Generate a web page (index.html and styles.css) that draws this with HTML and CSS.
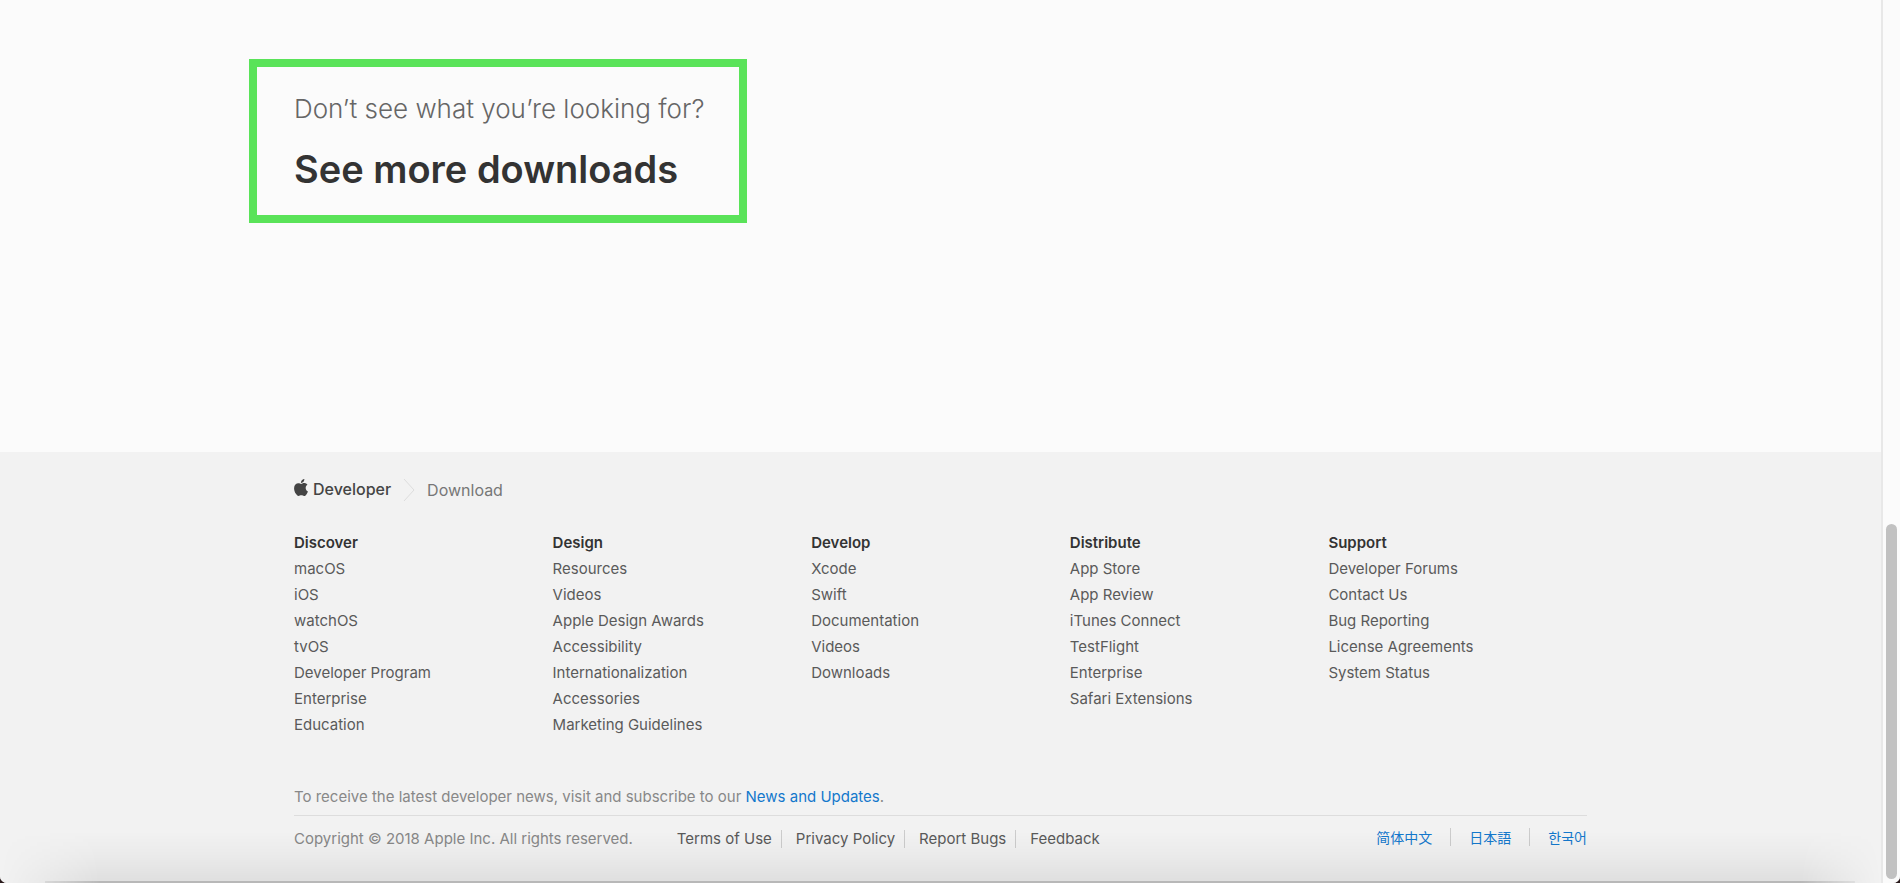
FILE: index.html
```html
<!DOCTYPE html>
<html lang="en">
<head>
<meta charset="utf-8">
<title>Downloads - Apple Developer</title>
<link rel="stylesheet" href="styles.css">
</head>
<body>
<div class="window">
  <div class="page">
    <main class="main">
      <div class="container">
        <section class="callout">
          <p class="callout-lead">Don’t see what you’re looking for?</p>
          <h2 class="callout-title"><a href="#more">See more downloads</a></h2>
        </section>
      </div>
    </main>
    <footer class="footer">
      <div class="container">
        <nav class="crumbs" aria-label="Breadcrumb">
          <a class="brand" href="#home">
            <svg class="brand-mark" viewBox="0 0 814 1000" aria-hidden="true"><path d="M788 341c-6 4-108 62-108 190 0 148 130 201 134 202-1 3-21 72-69 142-43 61-87 123-155 123s-85-40-164-40c-76 0-103 41-165 41s-106-57-155-127C46 790 0 666 0 541c0-194 127-297 251-297 66 0 121 43 163 43 39 0 101-46 177-46 28 0 131 3 197 100zM554 159c31-37 53-88 53-139 0-7-1-14-2-20-50 2-110 34-147 76-28 33-55 83-55 135 0 8 1 16 2 18 3 1 8 1 14 1 45 0 102-30 135-71z"/></svg>
            <span>Developer</span>
          </a>
          <svg class="crumb-arrow" viewBox="0 0 12 24" aria-hidden="true"><path d="M1 1l10 11L1 23"/></svg>
          <span class="crumb">Download</span>
        </nav>
        <nav class="directory" aria-label="Directory">
          <section>
            <h3>Discover</h3>
            <ul>
              <li><a href="#">macOS</a></li>
              <li><a href="#">iOS</a></li>
              <li><a href="#">watchOS</a></li>
              <li><a href="#">tvOS</a></li>
              <li><a href="#">Developer Program</a></li>
              <li><a href="#">Enterprise</a></li>
              <li><a href="#">Education</a></li>
            </ul>
          </section>
          <section>
            <h3>Design</h3>
            <ul>
              <li><a href="#">Resources</a></li>
              <li><a href="#">Videos</a></li>
              <li><a href="#">Apple Design Awards</a></li>
              <li><a href="#">Accessibility</a></li>
              <li><a href="#">Internationalization</a></li>
              <li><a href="#">Accessories</a></li>
              <li><a href="#">Marketing Guidelines</a></li>
            </ul>
          </section>
          <section>
            <h3>Develop</h3>
            <ul>
              <li><a href="#">Xcode</a></li>
              <li><a href="#">Swift</a></li>
              <li><a href="#">Documentation</a></li>
              <li><a href="#">Videos</a></li>
              <li><a href="#">Downloads</a></li>
            </ul>
          </section>
          <section>
            <h3>Distribute</h3>
            <ul>
              <li><a href="#">App Store</a></li>
              <li><a href="#">App Review</a></li>
              <li><a href="#">iTunes Connect</a></li>
              <li><a href="#">TestFlight</a></li>
              <li><a href="#">Enterprise</a></li>
              <li><a href="#">Safari Extensions</a></li>
            </ul>
          </section>
          <section>
            <h3>Support</h3>
            <ul>
              <li><a href="#">Developer Forums</a></li>
              <li><a href="#">Contact Us</a></li>
              <li><a href="#">Bug Reporting</a></li>
              <li><a href="#">License Agreements</a></li>
              <li><a href="#">System Status</a></li>
            </ul>
          </section>
        </nav>
        <p class="news">To receive the latest developer news, visit and subscribe to our <a href="#news">News and Updates</a>.</p>
        <div class="legal">
          <p class="copyright">Copyright © 2018 Apple Inc. All rights reserved.</p>
          <ul class="legal-links">
            <li><a href="#">Terms of Use</a></li>
            <li><a href="#">Privacy Policy</a></li>
            <li><a href="#">Report Bugs</a></li>
            <li><a href="#">Feedback</a></li>
          </ul>
          <ul class="languages">
            <li><a href="#" lang="zh-CN">简体中文</a></li>
            <li><a href="#" lang="ja">日本語</a></li>
            <li><a href="#" lang="ko">한국어</a></li>
          </ul>
        </div>
      </div>
    </footer>
  </div>
  <div class="scroll-track"><div class="scroll-thumb"></div></div>
  <div class="dock-shadow"></div>
</div>
</body>
</html>
```
FILE: styles.css
```css
* { box-sizing: border-box; }
html { background: #2a1a1c; }
body {
  margin: 0;
  font-family: Inter, "Liberation Sans", sans-serif;
  font-size: 15px;
  color: #5a5a5a;
}
a { color: inherit; text-decoration: none; }
ul { list-style: none; margin: 0; padding: 0; }
p, h2, h3 { margin: 0; }

.window {
  position: relative;
  display: flex;
  min-height: 100vh;
  border-radius: 0 0 7px 7px;
  overflow: hidden;
  background: #fbfbfb;
}
.page { flex: 1; display: flex; flex-direction: column; }
.container { width: 100%; max-width: 1293px; margin: 0 auto; }

.main { padding: 59px 0 229px; }
.callout {
  width: 498px;
  margin-left: -45px;
  padding: 24px 37px 20px;
  border: 8px solid #5ae359;
}
.callout-lead {
  font-size: 26px;
  font-weight: 300;
  line-height: 36px;
  color: #666;
  white-space: nowrap;
}
.callout-title {
  margin-top: 16px;
  font-size: 38px;
  font-weight: 600;
  line-height: 52px;
  color: #333;
  white-space: nowrap;
}

.footer { flex: 1; background: #f2f2f2; }
.crumbs { display: flex; align-items: center; height: 76px; margin-bottom: 2px; }
.brand {
  display: flex;
  align-items: center;
  gap: 5px;
  padding-bottom: 2px;
  font-size: 16px;
  font-weight: 500;
  color: #444;
}
.brand-mark { width: 14px; height: 17px; margin-bottom: 4px; fill: #444; }
.crumb-arrow {
  width: 12px;
  height: 24px;
  margin: 0 12px;
  fill: none;
  stroke: #ddd;
}
.crumb { font-size: 16px; color: #777; }

.directory { display: grid; grid-template-columns: repeat(5, 1fr); }
.directory h3 {
  font-size: 15px;
  font-weight: 600;
  line-height: 26px;
  color: #333;
}
.directory li { line-height: 26px; }

.news { margin-top: 48px; padding-bottom: 7px; line-height: 22px; color: #888; }
.news a { color: #1478cc; }
.legal { display: flex; border-top: 1px solid #ddd; padding-top: 12px; line-height: 22px; }
.copyright { color: #888; margin-right: 44px; }
.legal-links { display: flex; align-items: center; }
.legal-links li { line-height: 18px; }
.legal-links li + li { margin-left: 9px; padding-left: 14px; border-left: 1px solid #ccc; }
.languages { display: flex; margin-left: auto; font-size: 14px; color: #1478cc; }
.languages li { height: 18px; line-height: 18px; }
.languages li + li { margin-left: 18px; padding-left: 18px; border-left: 1px solid #ccc; }
.languages [lang="zh-CN"] { font-family: "Noto Sans CJK SC", sans-serif; }
.languages [lang="ja"] { font-family: "Noto Sans CJK JP", sans-serif; }
.languages [lang="ko"] { font-family: "Noto Sans CJK KR", sans-serif; }

.scroll-track {
  display: flex;
  flex-direction: column;
  justify-content: flex-end;
  align-items: center;
  width: 19px;
  padding-bottom: 4px;
  border-left: 2px solid #e8e8e8;
  background: #fbfbfb;
}
.scroll-thumb { width: 11px; height: 40.4%; border-radius: 6px; background: #c1c1c1; }

.dock-shadow {
  position: absolute;
  right: 19px;
  bottom: 0;
  left: 0;
  height: 52px;
  background: linear-gradient(to bottom, rgba(0, 0, 0, 0), rgba(0, 0, 0, 0.03) 50%, rgba(0, 0, 0, 0.08));
  mask-image: linear-gradient(to right, transparent, #000 100px, #000 calc(100% - 80px), transparent);
  pointer-events: none;
}
.dock-shadow::after {
  content: "";
  position: absolute;
  right: 26px;
  bottom: 0;
  left: 45px;
  height: 2px;
  background: #b8b8b8;
}
```
